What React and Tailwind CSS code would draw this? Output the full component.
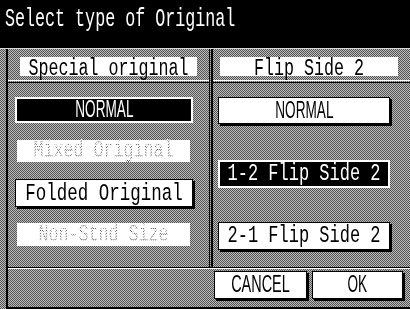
import React from 'react';

const mono = { fontFamily: '"Liberation Mono", "DejaVu Sans Mono", monospace' };
const sans = { fontFamily: '"Liberation Sans", Arial, sans-serif' };

// Tall bitmap-like mono text
function Mono({ children, className = '' }) {
    return (
        <span className={`inline-block scale-y-[1.4] ${className}`} style={mono}>
            {children}
        </span>
    );
}

// Condensed capitals (NORMAL / CANCEL / OK)
function Narrow({ children, className = '' }) {
    return (
        <span className={`inline-block text-[17px] scale-x-[0.8] scale-y-[1.4] ${className}`} style={sans}>
            {children}
        </span>
    );
}

function RaisedButton({ children, className = '' }) {
    return (
        <div className={`flex items-center justify-center bg-white text-black border border-black shadow-[2px_2px_0_#000] ${className}`}>
            {children}
        </div>
    );
}

function SelectedButton({ children, className = '' }) {
    return (
        <div className={`flex items-center justify-center bg-black text-white border-2 border-white ${className}`}>
            {children}
        </div>
    );
}

function DisabledButton({ children, className = '' }) {
    return (
        <div className={`flex items-center justify-center bg-white ${className}`}>
            <span
                className="inline-block scale-y-[1.4] text-[16.7px] text-transparent bg-clip-text bg-[image:repeating-conic-gradient(#555555_0_25%,#ffffff_0_50%)] bg-[length:2px_2px]"
                style={mono}
            >
                {children}
            </span>
        </div>
    );
}

export default function App() {
    return (
        <div className="w-[410px] h-[309px] bg-black flex flex-col overflow-hidden select-none">
            {/* Title */}
            <div className="h-[48px] pl-[5px] pt-[7px] text-white text-[16.7px] leading-[22px]">
                <Mono className="scale-y-[1.5]">Select type of Original</Mono>
            </div>

            {/* Panel */}
            <div className="flex-1 flex flex-col border-t border-[#d8d8d8] bg-[image:repeating-conic-gradient(#525252_0_25%,#bdbdbd_0_50%)] bg-[length:2px_2px]">
                <div className="flex-1 flex flex-col ml-[6px] border-l-2 border-b-2 border-black">
                    <div className="flex h-[218px]">
                        {/* Left column */}
                        <div className="w-[201px] flex flex-col">
                            <div className="h-[31px] pt-[8px] pl-[12px]">
                                <div className="w-[177px] h-[19px] bg-white text-black text-[16.7px] leading-[19px] text-center">
                                    <Mono>Special original</Mono>
                                </div>
                            </div>
                            <div className="h-[1px] bg-white" />
                            <div className="h-[1px]" />
                            <div className="h-[1px] bg-black" />
                            <div className="flex flex-col pl-[7px] pt-[14px]">
                                <SelectedButton className="w-[178px] h-[26px]">
                                    <Narrow>NORMAL</Narrow>
                                </SelectedButton>
                                <DisabledButton className="w-[173px] h-[22px] ml-[2px] mt-[17px]">
                                    Mixed Original
                                </DisabledButton>
                                <RaisedButton className="w-[178px] h-[28px] mt-[17px] text-[17.5px]">
                                    <Mono>Folded Original</Mono>
                                </RaisedButton>
                                <DisabledButton className="w-[173px] h-[23px] ml-[2px] mt-[16px]">
                                    Non-Stnd Size
                                </DisabledButton>
                            </div>
                        </div>

                        {/* Divider */}
                        <div className="w-[4px] flex">
                            <div className="w-[1px] bg-black" />
                            <div className="w-[1px]" />
                            <div className="w-[2px] bg-black rounded-b-full" />
                        </div>

                        {/* Right column */}
                        <div className="flex-1 flex flex-col">
                            <div className="h-[31px] pt-[8px] pl-[7px]">
                                <div className="w-[178px] h-[19px] bg-white text-black text-[16.7px] leading-[19px] text-center">
                                    <Mono>Flip Side 2</Mono>
                                </div>
                            </div>
                            <div className="h-[1px] bg-white" />
                            <div className="h-[1px]" />
                            <div className="h-[1px] bg-black" />
                            <div className="flex flex-col pl-[5px] pt-[14px]">
                                <RaisedButton className="w-[172px] h-[27px]">
                                    <Narrow>NORMAL</Narrow>
                                </RaisedButton>
                                <SelectedButton className="w-[172px] h-[28px] mt-[36px] text-[17px]">
                                    <Mono>1-2 Flip Side 2</Mono>
                                </SelectedButton>
                                <RaisedButton className="w-[172px] h-[28px] mt-[34px] text-[17px]">
                                    <Mono>2-1 Flip Side 2</Mono>
                                </RaisedButton>
                            </div>
                        </div>
                    </div>

                    {/* Bottom bar */}
                    <div className="h-[1px] bg-black" />
                    <div className="h-[1px] bg-white" />
                    <div className="flex-1 flex items-start gap-[5px] pl-[206px] pt-[2px]">
                        <RaisedButton className="w-[93px] h-[28px]">
                            <Narrow className="scale-x-[0.85]">CANCEL</Narrow>
                        </RaisedButton>
                        <RaisedButton className="w-[91px] h-[28px]">
                            <Narrow>OK</Narrow>
                        </RaisedButton>
                    </div>
                </div>
            </div>
        </div>
    );
}
